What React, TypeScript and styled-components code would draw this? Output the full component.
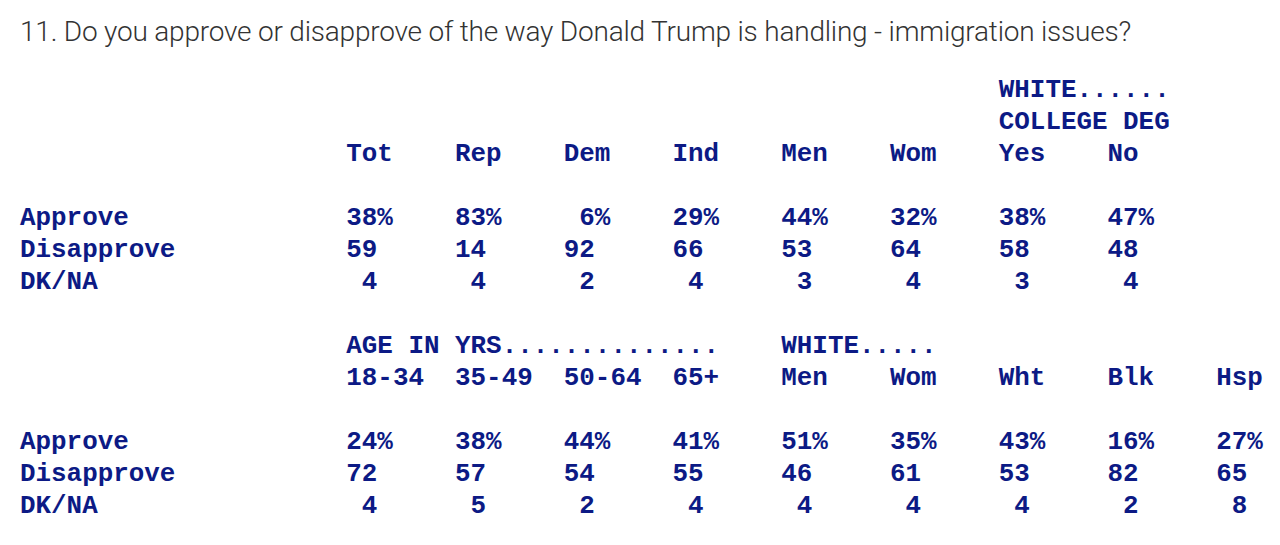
import React from "react";
import styled, { createGlobalStyle } from "styled-components";

const GlobalStyle = createGlobalStyle`
	body {
		margin: 0;
		background: #ffffff;
		overflow: hidden;
	}
`;

const Page = styled.div`
	padding: 14px 0 0 20px;
`;

const Question = styled.h2`
	margin: 0;
	font-family: Roboto, "Liberation Sans", sans-serif;
	font-weight: 300;
	font-size: 28px;
	line-height: 36px;
	color: #333333;
	letter-spacing: -0.2px;
`;

const Crosstab = styled.div`
	margin-top: 24px;
	display: grid;
	grid-template-columns: 21ch repeat(8, 7ch) auto;
	grid-auto-rows: 32px;
	align-items: center;
	font-family: "Liberation Mono", "DejaVu Sans Mono", monospace;
	font-weight: 700;
	font-size: 25.9px;
	color: #0c1a85;
	white-space: pre;
`;

const Cell = styled.div<{ $col?: number; $span?: number }>`
	grid-column: ${(p) => (p.$col ? `${p.$col} / span ${p.$span ?? 1}` : "auto")};
	line-height: 32px;
`;

const Blank = styled.div`
	grid-column: 1 / -1;
`;

type Row = { label: string; values: string[] };

type Section = {
	groups: { col: number; span: number; lines: string[] }[];
	heads: string[];
	rows: Row[];
};

const sections: Section[] = [
	{
		groups: [{ col: 8, span: 3, lines: ["WHITE......", "COLLEGE DEG"] }],
		heads: ["Tot", "Rep", "Dem", "Ind", "Men", "Wom", "Yes", "No"],
		rows: [
			{ label: "Approve", values: ["38%", "83%", " 6%", "29%", "44%", "32%", "38%", "47%"] },
			{ label: "Disapprove", values: ["59", "14", "92", "66", "53", "64", "58", "48"] },
			{ label: "DK/NA", values: [" 4", " 4", " 2", " 4", " 3", " 4", " 3", " 4"] },
		],
	},
	{
		groups: [
			{ col: 2, span: 4, lines: ["AGE IN YRS.............."] },
			{ col: 6, span: 2, lines: ["WHITE....."] },
		],
		heads: ["18-34", "35-49", "50-64", "65+", "Men", "Wom", "Wht", "Blk", "Hsp"],
		rows: [
			{ label: "Approve", values: ["24%", "38%", "44%", "41%", "51%", "35%", "43%", "16%", "27%"] },
			{ label: "Disapprove", values: ["72", "57", "54", "55", "46", "61", "53", "82", "65"] },
			{ label: "DK/NA", values: [" 4", " 5", " 2", " 4", " 4", " 4", " 4", " 2", " 8"] },
		],
	},
];

function SectionRows({ section, first }: { section: Section; first: boolean }) {
	const lineCount = Math.max(...section.groups.map((g) => g.lines.length));
	const headerLines = Array.from({ length: lineCount }, (_, i) => i);

	return (
		<>
			{!first && <Blank />}
			{headerLines.map((i) => (
				<React.Fragment key={`g${i}`}>
					<Cell $col={1} />
					{section.groups.map((g) => (
						<Cell key={g.col} $col={g.col} $span={g.span}>
							{g.lines[i - (lineCount - g.lines.length)] ?? ""}
						</Cell>
					))}
				</React.Fragment>
			))}
			<Cell $col={1} />
			{section.heads.map((h, i) => (
				<Cell key={h + i} $col={i + 2}>
					{h}
				</Cell>
			))}
			<Blank />
			{section.rows.map((r) => (
				<React.Fragment key={r.label}>
					<Cell $col={1}>{r.label}</Cell>
					{r.values.map((v, i) => (
						<Cell key={i} $col={i + 2}>
							{v}
						</Cell>
					))}
				</React.Fragment>
			))}
		</>
	);
}

export default function App() {
	return (
		<>
			<GlobalStyle />
			<Page>
				<Question>
					11. Do you approve or disapprove of the way Donald Trump is handling - immigration issues?
				</Question>
				<Crosstab>
					{sections.map((s, i) => (
						<SectionRows key={i} section={s} first={i === 0} />
					))}
				</Crosstab>
			</Page>
		</>
	);
}
